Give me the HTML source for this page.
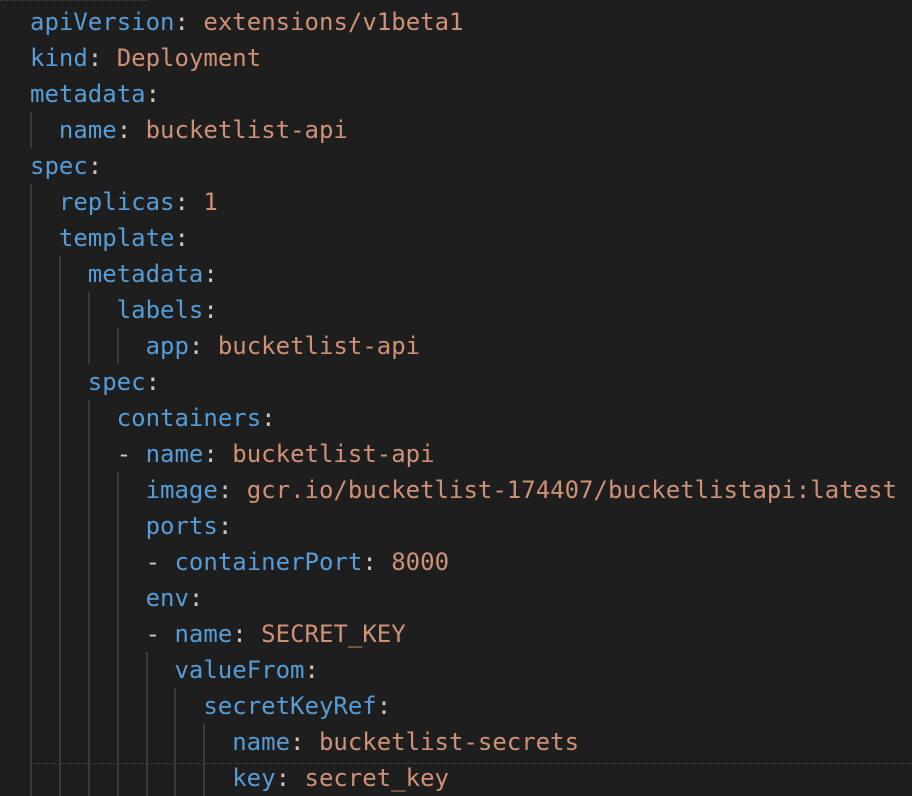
<!DOCTYPE html>
<html><head><style>
html,body{margin:0;padding:0;background:#1e1e1e;width:912px;height:796px;overflow:hidden}
.c{position:absolute;top:4px;left:30px;font-family:"DejaVu Sans Mono","Liberation Mono",monospace;font-size:24px;line-height:36px;color:#d4d4d4}
.c span{white-space:pre}
.l{height:36px;display:flex;white-space:nowrap}
.i{display:inline-block;width:2ch;height:36px;box-sizing:border-box;border-left:2px solid #3d3a3a;flex:none}
.k{color:#569cd6}.v{color:#ce9178}.p{color:#cfc6bd}
.dot{position:absolute;left:30px;right:0;top:763px;border-top:1px dotted #3a4a5a}
.dot0{position:absolute;left:0;width:150px;top:0;border-top:1px dotted #444}
</style></head><body>
<div class="dot0"></div>
<div class="dot"></div>
<div class="c"><div class="l"><span class="k">apiVersion</span><span class="p">: </span><span class="v">extensions/v1beta1</span></div><div class="l"><span class="k">kind</span><span class="p">: </span><span class="v">Deployment</span></div><div class="l"><span class="k">metadata</span><span class="p">:</span></div><div class="l"><span class="i"></span><span class="k">name</span><span class="p">: </span><span class="v">bucketlist-api</span></div><div class="l"><span class="k">spec</span><span class="p">:</span></div><div class="l"><span class="i"></span><span class="k">replicas</span><span class="p">: </span><span class="v">1</span></div><div class="l"><span class="i"></span><span class="k">template</span><span class="p">:</span></div><div class="l"><span class="i"></span><span class="i"></span><span class="k">metadata</span><span class="p">:</span></div><div class="l"><span class="i"></span><span class="i"></span><span class="i"></span><span class="k">labels</span><span class="p">:</span></div><div class="l"><span class="i"></span><span class="i"></span><span class="i"></span><span class="i"></span><span class="k">app</span><span class="p">: </span><span class="v">bucketlist-api</span></div><div class="l"><span class="i"></span><span class="i"></span><span class="k">spec</span><span class="p">:</span></div><div class="l"><span class="i"></span><span class="i"></span><span class="i"></span><span class="k">containers</span><span class="p">:</span></div><div class="l"><span class="i"></span><span class="i"></span><span class="i"></span><span class="p">- </span><span class="k">name</span><span class="p">: </span><span class="v">bucketlist-api</span></div><div class="l"><span class="i"></span><span class="i"></span><span class="i"></span><span class="i"></span><span class="k">image</span><span class="p">: </span><span class="v">gcr.io/bucketlist-174407/bucketlistapi:latest</span></div><div class="l"><span class="i"></span><span class="i"></span><span class="i"></span><span class="i"></span><span class="k">ports</span><span class="p">:</span></div><div class="l"><span class="i"></span><span class="i"></span><span class="i"></span><span class="i"></span><span class="p">- </span><span class="k">containerPort</span><span class="p">: </span><span class="v">8000</span></div><div class="l"><span class="i"></span><span class="i"></span><span class="i"></span><span class="i"></span><span class="k">env</span><span class="p">:</span></div><div class="l"><span class="i"></span><span class="i"></span><span class="i"></span><span class="i"></span><span class="p">- </span><span class="k">name</span><span class="p">: </span><span class="v">SECRET_KEY</span></div><div class="l"><span class="i"></span><span class="i"></span><span class="i"></span><span class="i"></span><span class="i"></span><span class="k">valueFrom</span><span class="p">:</span></div><div class="l"><span class="i"></span><span class="i"></span><span class="i"></span><span class="i"></span><span class="i"></span><span class="i"></span><span class="k">secretKeyRef</span><span class="p">:</span></div><div class="l"><span class="i"></span><span class="i"></span><span class="i"></span><span class="i"></span><span class="i"></span><span class="i"></span><span class="i"></span><span class="k">name</span><span class="p">: </span><span class="v">bucketlist-secrets</span></div><div class="l"><span class="i"></span><span class="i"></span><span class="i"></span><span class="i"></span><span class="i"></span><span class="i"></span><span class="i"></span><span class="k">key</span><span class="p">: </span><span class="v">secret_key</span></div></div>
</body></html>
